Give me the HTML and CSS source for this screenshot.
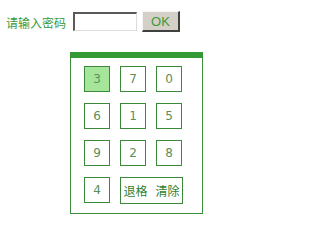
FILE: index.html
```html
<!DOCTYPE html>
<html>
<head>
<meta charset="utf-8">
<link rel="stylesheet" href="styles.css">
</head>
<body>
<div class="top">
  <span class="label">请输入密码</span>
  <input class="pwd" type="password">
  <button class="ok">OK</button>
</div>
<div class="pad">
  <div class="keys">
    <div class="key active">3</div>
    <div class="key">7</div>
    <div class="key">0</div>
    <div class="key">6</div>
    <div class="key">1</div>
    <div class="key">5</div>
    <div class="key">9</div>
    <div class="key">2</div>
    <div class="key">8</div>
    <div class="key">4</div>
    <div class="key wide"><span>退格</span><span>清除</span></div>
  </div>
</div>
</body>
</html>
```
FILE: styles.css
```css
html, body {
  margin: 0;
  padding: 0;
  background: #ffffff;
}
body {
  font-family: "Noto Sans CJK SC", "Liberation Sans", sans-serif;
}
.top {
  display: flex;
  align-items: center;
  padding: 11px 0 0 6px;
  height: 21px;
}
.label {
  font-size: 12px;
  line-height: 14px;
  color: #3a9a3a;
  width: 60px;
  margin-top: 2px;
}
.pwd {
  box-sizing: border-box;
  width: 64px;
  height: 19px;
  margin: 0 0 0 7px;
  padding: 0;
  border-style: solid;
  border-width: 2px 1px 1px 2px;
  border-color: #5a5a5a #dcdcdc #dcdcdc #5a5a5a;
  background: #fff;
  outline: none;
}
.ok {
  box-sizing: border-box;
  width: 38px;
  height: 21px;
  margin: 0 0 0 5px;
  padding: 0;
  background: #d4d0c8;
  border-style: solid;
  border-width: 1px 2px 2px 1px;
  border-color: #f4f4f4 #404040 #404040 #f4f4f4;
  font-family: "Liberation Sans", sans-serif;
  font-size: 13px;
  color: #3a9a3a;
}
.pad {
  box-sizing: border-box;
  width: 133px;
  height: 162px;
  margin: 20px 0 0 70px;
  border: 1px solid #3a8f3a;
  border-top: 6px solid #339933;
  padding: 8px 0 0 13px;
}
.keys {
  display: grid;
  grid-template-columns: 26px 26px 26px;
  grid-auto-rows: 26px;
  column-gap: 10px;
  row-gap: 11px;
}
.key {
  box-sizing: border-box;
  border: 1px solid #3a8a3a;
  display: flex;
  align-items: center;
  justify-content: center;
  font-family: "DejaVu Sans", sans-serif;
  font-size: 12px;
  color: #5a8f5a;
  background: #fff;
}
.key.active {
  background: #a6e69a;
}
.key.wide {
  grid-column: span 2;
  width: 63px;
  height: 27px;
  gap: 8px;
  font-family: "Noto Sans CJK SC", sans-serif;
  font-size: 12px;
  color: #2f7f2f;
}
```
